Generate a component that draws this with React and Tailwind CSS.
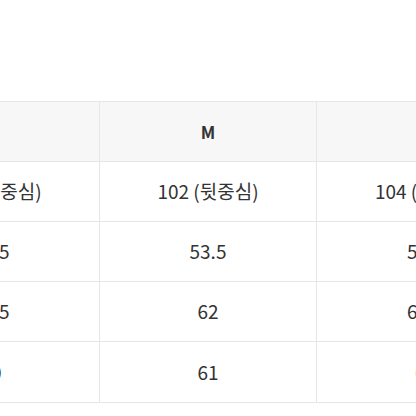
export default function App() {
  const rows = [
    ["101 (뒷중심)", "102 (뒷중심)", "104 (뒷중심)"],
    ["51.5", "53.5", "55.5"],
    ["60.5", "62", "63.5"],
    ["60", "61", "62"],
  ];
  const font = { fontFamily: '"Noto Sans CJK KR", "Noto Sans", sans-serif' };
  return (
    <div className="w-[416px] h-[416px] overflow-hidden bg-white text-[#333333]" style={font}>
      <div className="mt-[101px] ml-[-117px] w-[651px] border-t border-b border-[#e6e6e6]">
        <div className="grid grid-cols-[217px_217px_217px] h-[60px] bg-[#f7f7f7] border-b border-[#e6e6e6]">
          {["S", "M", "L"].map((h, i) => (
            <div key={i} className={`flex items-center justify-center text-[17px] font-bold ${i < 2 ? "border-r border-[#e6e6e6]" : ""}`}>
              {h}
            </div>
          ))}
        </div>
        {rows.map((r, ri) => (
          <div key={ri} className={`grid grid-cols-[217px_217px_217px] h-[60px] ${ri < rows.length - 1 ? "border-b border-[#e6e6e6]" : ""}`}>
            {r.map((c, ci) => (
              <div key={ci} className={`flex items-center justify-center text-[19px] ${ci < 2 ? "border-r border-[#e6e6e6]" : ""}`}>
                {c}
              </div>
            ))}
          </div>
        ))}
      </div>
    </div>
  );
}
